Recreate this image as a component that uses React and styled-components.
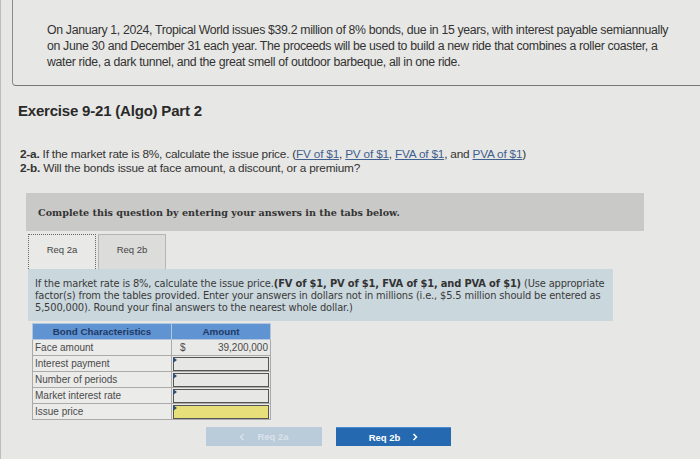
import React from 'react';
import styled, { createGlobalStyle } from 'styled-components';

const GlobalStyle = createGlobalStyle`
  html, body {
    margin: 0;
    padding: 0;
    background: #e7e7e5;
  }
  body {
    font-family: "Liberation Sans", Arial, sans-serif;
    color: #2b2b2b;
  }
`;

const Page = styled.div`
  width: 700px;
  height: 459px;
  overflow: hidden;
  padding-left: 3px;
  box-sizing: border-box;
  border-left: 1px solid #bdbdbb;
`;

const IntroCard = styled.div`
  margin-left: 8px;
  border-left: 1px solid #8a8a88;
  border-bottom: 1px solid #777;
  border-bottom-left-radius: 4px;
  padding: 22px 0 17px 34px;
  height: 86px;
  box-sizing: border-box;
  font-size: 12.3px;
  line-height: 16px;
  letter-spacing: -0.33px;
  color: #333;
  white-space: nowrap;
`;

const Title = styled.h2`
  margin: 16px 0 0 14px;
  font-size: 15px;
  font-weight: bold;
  letter-spacing: -0.2px;
  color: #2a2a2a;
`;

const Questions = styled.div`
  margin: 28px 0 0 16px;
  font-size: 11.8px;
  line-height: 14px;
  letter-spacing: -0.2px;
  color: #333;
  white-space: nowrap;
  b { font-weight: bold; }
  a { color: #3f5f8f; text-decoration: underline; }
`;

const Notice = styled.div`
  margin: 18px 0 0 22px;
  width: 618px;
  height: 38px;
  background: #c9c9c7;
  display: flex;
  align-items: center;
  padding-left: 12px;
  box-sizing: border-box;
  font-family: "DejaVu Serif", Georgia, serif;
  font-weight: bold;
  font-size: 9.6px;
  color: #333;
`;

const Tabs = styled.div`
  display: flex;
  gap: 2px;
  margin: 3px 0 0 24px;
  height: 35px;
`;

const Tab = styled.div`
  width: 68px;
  height: 35px;
  box-sizing: border-box;
  display: flex;
  align-items: center;
  justify-content: center;
  padding-bottom: 6px;
  font-size: 9.5px;
  color: #444;
  background: ${p => (p.$active ? '#e9e9e7' : '#dcdcda')};
  border: ${p => (p.$active ? '1px dotted #666' : '1px solid #b5b5b3')};
  border-bottom: none;
`;

const Instructions = styled.div`
  margin-left: 24px;
  width: 585px;
  height: 52px;
  box-sizing: border-box;
  background: #cad7dd;
  padding: 9px 0 0 7px;
  font-family: "DejaVu Sans", Verdana, sans-serif;
  font-size: 9.9px;
  line-height: 12px;
  letter-spacing: -0.15px;
  color: #3a3a3a;
  white-space: nowrap;
  b { font-weight: bold; color: #333; }
`;

const Table = styled.table`
  margin: 2px 0 0 28px;
  border-collapse: collapse;
  font-size: 10px;
  color: #4a4a4a;
  td, th { padding: 0; height: 15px; }
`;

const Head = styled.th`
  background: #5f93d2;
  color: #1f3a66;
  font-weight: bold;
  font-size: 9.8px;
  text-align: center;
  width: ${p => p.$w}px;
  border: 1px solid #b4c6de;
`;

const LabelCell = styled.td`
  border: 1px solid #aaa;
  background: #ebebe9;
  padding-left: 2px !important;
  width: 136px;
`;

const AmountCell = styled.td`
  border: 1px solid #aaa;
  background: #e9e9e7;
  width: 98px;
`;

const Face = styled.div`
  display: flex;
  justify-content: space-between;
  padding: 0 2px 0 8px;
`;

const Input = styled.div`
  height: 12px;
  margin: 0 1px;
  border: 1px solid #555;
  background: ${p => (p.$yellow ? '#e6df7a' : '#e7e7e5')};
  position: relative;
  &::before {
    content: '';
    position: absolute;
    left: -1px;
    top: -1px;
    border-top: 3px solid transparent;
    border-bottom: 3px solid transparent;
    border-left: 4px solid #2d4f73;
  }
`;

const Nav = styled.div`
  display: flex;
  gap: 14px;
  margin: 7px 0 0 202px;
`;

const NavButton = styled.div`
  width: ${p => (p.$next ? '115px' : '116px')};
  height: 19px;
  display: flex;
  align-items: center;
  justify-content: center;
  gap: 12px;
  font-size: 9.5px;
  font-weight: bold;
  color: ${p => (p.$next ? '#ffffff' : '#d9e2ea')};
  background: ${p => (p.$next ? '#2569b1' : '#bacbd9')};
  box-sizing: border-box;
  border-top: ${p => (p.$next ? '1px solid #4a8ad0' : 'none')};
`;

const Chevron = ({ dir }) => (
  <svg width="6" height="8" viewBox="0 0 6 8">
    <path
      d={dir === 'left' ? 'M4.5 1 L1.5 4 L4.5 7' : 'M1.5 1 L4.5 4 L1.5 7'}
      fill="none"
      stroke="currentColor"
      strokeWidth="1.5"
    />
  </svg>
);

const rows = ['Interest payment', 'Number of periods', 'Market interest rate', 'Issue price'];

export default function App() {
  return (
    <>
      <GlobalStyle />
      <Page>
        <IntroCard>
          On January 1, 2024, Tropical World issues $39.2 million of 8% bonds, due in 15 years, with interest payable semiannually<br />
          on June 30 and December 31 each year. The proceeds will be used to build a new ride that combines a roller coaster, a<br />
          water ride, a dark tunnel, and the great smell of outdoor barbeque, all in one ride.
        </IntroCard>
        <Title>Exercise 9-21 (Algo) Part 2</Title>
        <Questions>
          <div>
            <b>2-a.</b> If the market rate is 8%, calculate the issue price. (<a>FV of $1</a>, <a>PV of $1</a>, <a>FVA of $1</a>, and <a>PVA of $1</a>)
          </div>
          <div>
            <b>2-b.</b> Will the bonds issue at face amount, a discount, or a premium?
          </div>
        </Questions>
        <Notice>Complete this question by entering your answers in the tabs below.</Notice>
        <Tabs>
          <Tab $active>Req 2a</Tab>
          <Tab>Req 2b</Tab>
        </Tabs>
        <Instructions>
          If the market rate is 8%, calculate the issue price.<b>(FV of $1, PV of $1, FVA of $1, and PVA of $1)</b> (Use appropriate<br />
          factor(s) from the tables provided. Enter your answers in dollars not in millions (i.e., $5.5 million should be entered as<br />
          5,500,000). Round your final answers to the nearest whole dollar.)
        </Instructions>
        <Table>
          <thead>
            <tr>
              <Head $w={138}>Bond Characteristics</Head>
              <Head $w={98}>Amount</Head>
            </tr>
          </thead>
          <tbody>
            <tr>
              <LabelCell>Face amount</LabelCell>
              <AmountCell>
                <Face><span>$</span><span>39,200,000</span></Face>
              </AmountCell>
            </tr>
            {rows.map((r, i) => (
              <tr key={r}>
                <LabelCell>{r}</LabelCell>
                <AmountCell>
                  <Input $yellow={i === rows.length - 1} />
                </AmountCell>
              </tr>
            ))}
          </tbody>
        </Table>
        <Nav>
          <NavButton><Chevron dir="left" /><span>Req 2a</span></NavButton>
          <NavButton $next><span>Req 2b</span><Chevron dir="right" /></NavButton>
        </Nav>
      </Page>
    </>
  );
}
